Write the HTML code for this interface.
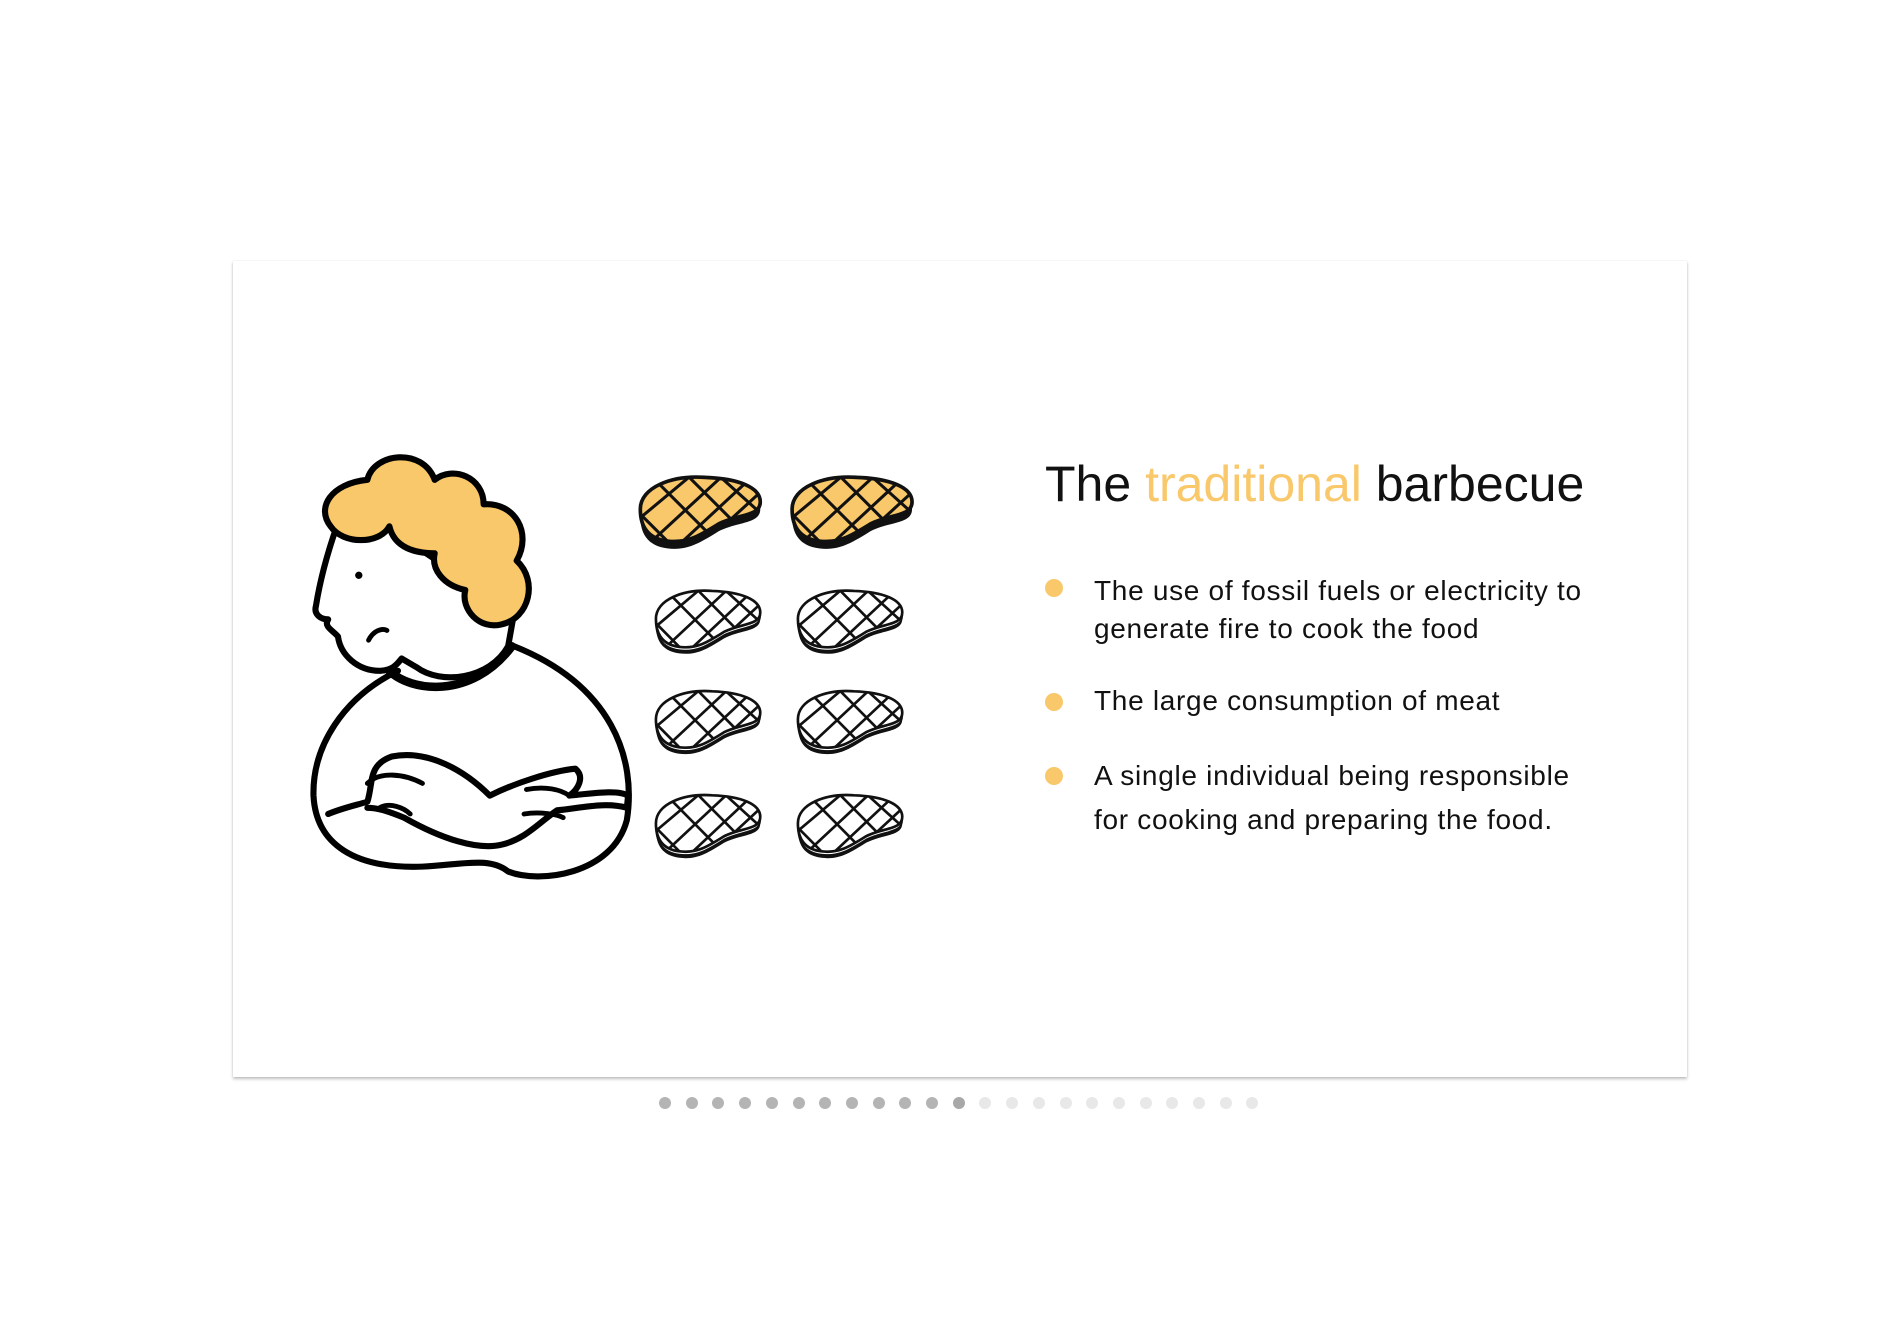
<!DOCTYPE html>
<html><head><meta charset="utf-8"><style>
body{margin:0;width:1900px;height:1344px;background:#fff;position:relative;overflow:hidden;font-family:"Liberation Sans",sans-serif}
.card{position:absolute;left:233px;top:261px;width:1454px;height:816px;background:#fff;box-shadow:0 2px 3px rgba(0,0,0,.25),0 0 1px rgba(0,0,0,.12)}
h1{position:absolute;left:1045px;top:454px;margin:0;font-weight:normal;font-size:50px;line-height:60px;white-space:nowrap;color:#111}
.o{color:#f9c86a}
.b{position:absolute;width:18px;height:18px;border-radius:50%;background:#f9c86a}
.l{position:absolute;left:1094px;font-size:28px;line-height:32px;white-space:nowrap;color:#111;letter-spacing:0.7px}
.dots{position:absolute;top:1097px;left:659px}
.dots span{position:absolute;width:12px;height:12px;border-radius:50%;top:0}
</style></head><body>
<div class="card"></div>
<h1>The <span class="o">traditional</span> barbecue</h1>
<div class="b" style="left:1045px;top:579px"></div>
<div class="l" style="top:575px">The use of fossil fuels or electricity to</div>
<div class="l" style="top:613px">generate fire to cook the food</div>
<div class="b" style="left:1045px;top:693px"></div>
<div class="l" style="top:685px">The large consumption of meat</div>
<div class="b" style="left:1045px;top:767px"></div>
<div class="l" style="top:760px">A single individual being responsible</div>
<div class="l" style="top:804px">for cooking and preparing the food.</div>

<svg style="position:absolute;left:0;top:0" width="1900" height="1344" viewBox="0 0 1552 1098">
<defs>
<path id="st" d="M2,28 C2,10 28,0 55,2 C82,3 100,10 100,22 C100,34 82,32 66,40 C50,50 40,56 24,54 C8,52 2,42 2,28Z"/>
<clipPath id="cp"><use href="#st"/></clipPath>
<g id="grid" clip-path="url(#cp)" stroke="#111" stroke-width="2.5" fill="none">
<path d="M-10,20 L40,70 M10,0 L70,60 M35,-5 L90,50 M60,-5 L110,40 M85,-5 L115,25"/>
<path d="M-10,45 L50,-5 M5,60 L70,0 M25,65 L95,0 M50,60 L110,5"/>
</g>
<g id="so"><use href="#st" transform="translate(0,6)" fill="#111"/><use href="#st" fill="#f9c86a" stroke="#111" stroke-width="3"/><use href="#grid"/></g>
<g id="sw"><use href="#st" transform="translate(0,6)" fill="#111"/><use href="#st" transform="translate(0,3)" fill="#fff" stroke="#111" stroke-width="1.5"/><use href="#st" fill="#fff" stroke="#111" stroke-width="2.5"/><use href="#grid"/></g>
</defs>
<use href="#so" transform="translate(521,388)"/>
<use href="#so" transform="translate(645,388)"/>
<use href="#sw" transform="translate(534,481) scale(0.87,0.88)"/>
<use href="#sw" transform="translate(650,481) scale(0.87,0.88)"/>
<use href="#sw" transform="translate(534,563) scale(0.87,0.88)"/>
<use href="#sw" transform="translate(650,563) scale(0.87,0.88)"/>
<use href="#sw" transform="translate(534,648) scale(0.87,0.88)"/>
<use href="#sw" transform="translate(650,648) scale(0.87,0.88)"/>

<g stroke="#000" stroke-width="5" stroke-linecap="round" stroke-linejoin="round">
<path d="M325,548 C280,570 255,610 256,650 C258,690 290,710 345,708 C380,706 400,700 415,712 C440,722 500,715 512,670 C520,620 500,560 420,528" fill="#fff"/>
<path d="M275,430 C268,450 262,470 258,495 C256,502 262,506 268,506 C264,512 272,515 276,520 C278,535 292,548 310,548 C322,548 326,540 328,538 L340,545 C360,560 400,555 415,528 L420,500 L300,420Z" fill="#fff"/>
<path d="M318,548 C335,565 385,572 418,528" fill="none" stroke-width="7"/>
<path d="M300,392 C305,370 345,365 355,392 C370,380 395,390 395,412 C420,410 435,435 422,458 C440,475 432,505 410,510 C392,515 376,498 380,482 C362,478 352,465 355,452 C340,452 322,448 318,430 C310,445 280,445 270,430 C258,415 270,395 300,392Z" fill="#f9c86a"/>
<circle cx="293" cy="470" r="3" fill="#000" stroke="none"/>
<path d="M301,523 C305,515 312,513 316,515" fill="none" stroke-width="4"/>
<path d="M268,665 C280,660 290,658 300,655 C305,640 300,625 320,618 C350,612 380,630 400,650 C420,640 450,630 470,628 C478,635 472,645 465,650 C485,648 505,645 513,650 L512,660 C495,655 475,660 455,662 C440,672 430,685 410,690 C390,695 360,685 330,668 C320,664 310,660 300,660" fill="#fff"/>
<path d="M300,640 C310,630 330,632 345,640 M310,660 C318,655 330,660 335,665 M430,645 C445,642 458,645 465,650 M428,665 C440,663 455,665 460,668" fill="none" stroke-width="4"/>
</g>
</svg>

<div class="dots">
<span style="left:0;background:#b4b4b4"></span><span style="left:26.7px;background:#b4b4b4"></span><span style="left:53.4px;background:#b4b4b4"></span><span style="left:80.1px;background:#b4b4b4"></span><span style="left:106.8px;background:#b4b4b4"></span><span style="left:133.5px;background:#b4b4b4"></span><span style="left:160.2px;background:#b4b4b4"></span><span style="left:186.9px;background:#b4b4b4"></span><span style="left:213.6px;background:#b4b4b4"></span><span style="left:240.3px;background:#b4b4b4"></span><span style="left:267px;background:#b4b4b4"></span><span style="left:293.7px;background:#a8a8a8"></span><span style="left:320.4px;background:#e8e8e8"></span><span style="left:347.1px;background:#e8e8e8"></span><span style="left:373.8px;background:#e8e8e8"></span><span style="left:400.5px;background:#e8e8e8"></span><span style="left:427.2px;background:#e8e8e8"></span><span style="left:453.9px;background:#e8e8e8"></span><span style="left:480.6px;background:#e8e8e8"></span><span style="left:507.3px;background:#e8e8e8"></span><span style="left:534px;background:#e8e8e8"></span><span style="left:560.7px;background:#e8e8e8"></span><span style="left:587.4px;background:#e8e8e8"></span>
</div>
</body></html>
